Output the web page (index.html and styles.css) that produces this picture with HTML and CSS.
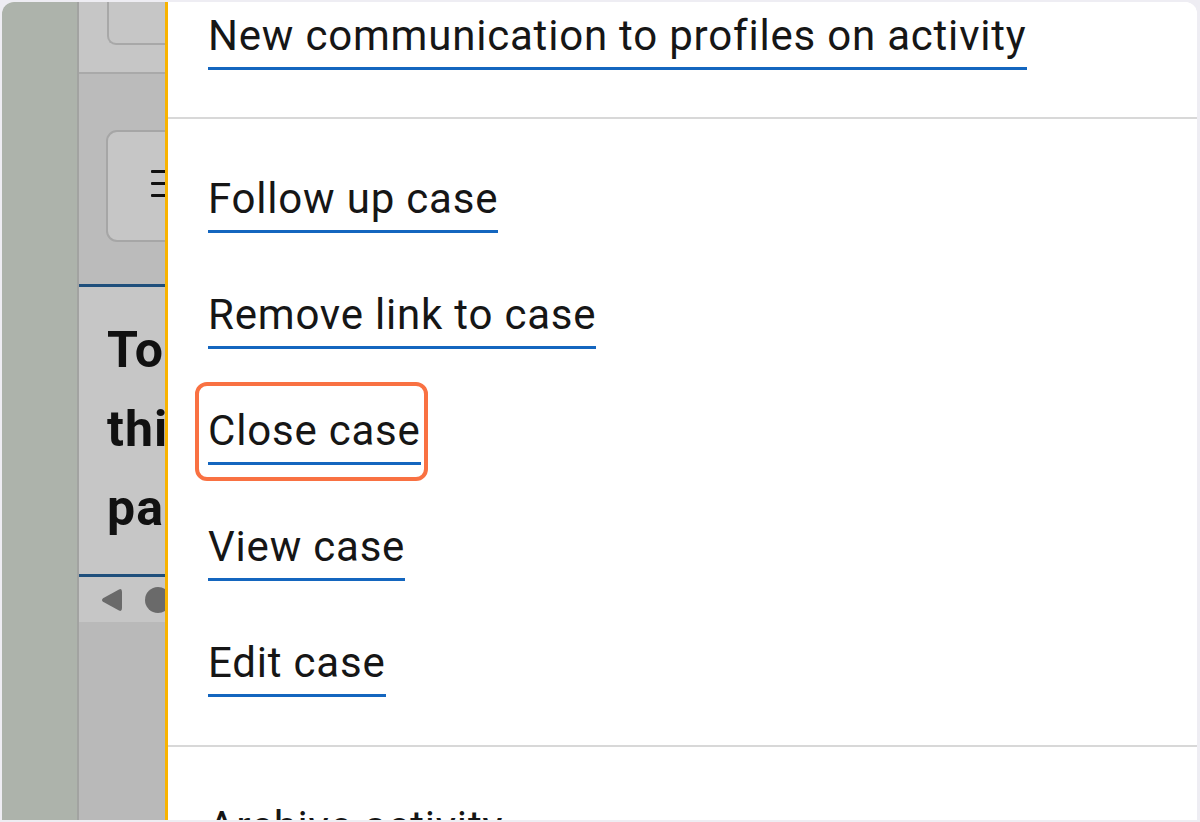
FILE: index.html
```html
<!DOCTYPE html>
<html lang="en">
<head>
<meta charset="utf-8">
<title>Activity actions</title>
<link rel="stylesheet" href="styles.css">
</head>
<body>
<div class="window">
  <div class="rail"></div>
  <div class="rail-divider"></div>
  <div class="pane">
    <div class="pane-top"><div class="tab-box"></div></div>
    <div class="rule-grey"></div>
    <div class="pane-mid">
      <div class="menu-button">
        <span class="bar"></span><span class="bar"></span><span class="bar"></span>
      </div>
    </div>
    <div class="rule-blue"></div>
    <div class="pane-text">
      <div class="pane-line">To do</div>
      <div class="pane-line">thi</div>
      <div class="pane-line">pa</div>
    </div>
    <div class="rule-blue"></div>
    <div class="pane-scroll">
      <svg class="scroll-arrow" width="21" height="26" viewBox="0 0 21 26"><path d="M18 2.5 Q21 1 21 5 L21 21 Q21 25 18 23.5 L2 14.8 Q0 13 2 11.2 Z" fill="#6a6a6a"/></svg>
      <span class="scroll-thumb"></span>
    </div>
    <div class="pane-bottom"></div>
  </div>
  <div class="accent"></div>
  <nav class="menu">
    <ul class="menu-group first">
      <li><a class="menu-link" href="#">New communication to profiles on activity</a></li>
    </ul>
    <hr class="menu-sep">
    <ul class="menu-group">
      <li><a class="menu-link" href="#">Follow up case</a></li>
      <li><a class="menu-link" href="#">Remove link to case</a></li>
      <li><a class="menu-link highlight" href="#">Close case</a></li>
      <li><a class="menu-link" href="#">View case</a></li>
      <li><a class="menu-link" href="#">Edit case</a></li>
    </ul>
    <hr class="menu-sep">
    <ul class="menu-group">
      <li><a class="menu-link" href="#">Archive activity</a></li>
    </ul>
  </nav>
</div>
</body>
</html>
```
FILE: styles.css
```css
html, body {
  margin: 0;
  padding: 0;
  height: 822px;
  overflow: hidden;
  background: #eeedf3;
}

.window {
  margin: 2px 3px 2px 2px;
  height: 818px;
  border-radius: 12px 12px 0 0;
  overflow: hidden;
  display: flex;
  background: #ffffff;
}

.rail {
  width: 75px;
  flex: none;
  background: #adb3ab;
}

.rail-divider {
  width: 2px;
  flex: none;
  background: #a2a3a1;
}

.pane {
  width: 86px;
  flex: none;
  display: flex;
  flex-direction: column;
  overflow: hidden;
}

.pane-top {
  height: 70px;
  flex: none;
  background: #c6c6c6;
  padding-left: 28px;
  box-sizing: border-box;
}

.tab-box {
  width: 120px;
  height: 43px;
  box-sizing: border-box;
  border-left: 2px solid #a8a8a8;
  border-bottom: 2px solid #a8a8a8;
  border-radius: 0 0 0 9px;
  background: #c6c6c6;
}

.rule-grey {
  height: 2px;
  flex: none;
  background: #a9a9a9;
}

.pane-mid {
  height: 210px;
  flex: none;
  background: #bbbbbb;
  padding: 56px 0 0 27px;
  box-sizing: border-box;
}

.menu-button {
  width: 120px;
  height: 112px;
  box-sizing: border-box;
  border: 2px solid #a6a6a6;
  border-radius: 11px;
  background: #c6c6c6;
  padding: 38px 0 0 43px;
  display: flex;
  flex-direction: column;
  gap: 9px;
}

.bar {
  display: block;
  width: 22px;
  height: 3px;
  background: #111111;
  border-radius: 1px;
}

.rule-blue {
  height: 3px;
  flex: none;
  background: #1f4f7c;
}

.pane-text {
  height: 287px;
  flex: none;
  background: #c6c6c6;
  padding: 24px 0 0 28px;
  box-sizing: border-box;
  font-family: Roboto, "Liberation Sans", sans-serif;
  font-weight: 700;
  font-size: 50px;
  letter-spacing: 1px;
  line-height: 79px;
  color: #111111;
  white-space: nowrap;
}

.pane-scroll {
  height: 45px;
  flex: none;
  background: #c6c6c6;
  display: flex;
  align-items: center;
  padding: 0 0 0 22px;
  box-sizing: border-box;
  gap: 23px;
}

.scroll-arrow {
  flex: none;
  display: block;
}

.scroll-thumb {
  flex: none;
  width: 26px;
  height: 26px;
  border-radius: 50%;
  background: #6a6a6a;
}

.pane-bottom {
  flex: 1;
  background: #b9b9b9;
}

.accent {
  width: 3px;
  flex: none;
  background: #f8b300;
}

.menu {
  flex: 1;
  background: #ffffff;
  display: flex;
  flex-direction: column;
}

.menu-group {
  list-style: none;
  margin: 0;
  padding: 55px 40px 48px;
  display: flex;
  flex-direction: column;
  gap: 57px;
}

.menu-group.first {
  padding-top: 9px;
  padding-bottom: 47px;
}

.menu-group li {
  display: flex;
}

.menu-link {
  display: block;
  position: relative;
  font-family: Roboto, "Liberation Sans", sans-serif;
  font-size: 42px;
  letter-spacing: 0.8px;
  line-height: 50px;
  padding-bottom: 6px;
  border-bottom: 3px solid #1466bf;
  color: #161616;
  text-decoration: none;
  white-space: nowrap;
}

.menu-sep {
  margin: 0;
  border: 0;
  height: 2px;
  background: #d8d8d8;
  flex: none;
}

.highlight::after {
  content: "";
  position: absolute;
  top: -24px;
  right: -7px;
  bottom: -19px;
  left: -13px;
  border: 4px solid #f97142;
  border-radius: 12px;
}
```
